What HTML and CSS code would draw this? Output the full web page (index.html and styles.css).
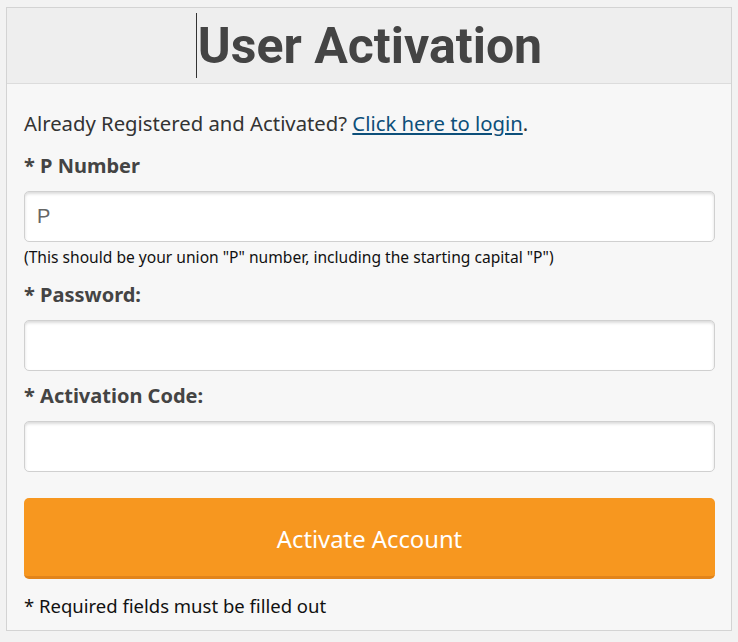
FILE: index.html
```html
<!DOCTYPE html>
<html lang="en">
<head>
  <meta charset="UTF-8">
  <title>User Activation</title>
  <link rel="stylesheet" href="styles.css">
</head>
<body>
  <div class="panel">
    <div class="panel-head">
      <h1><span class="caret"></span>User Activation</h1>
    </div>
    <form class="panel-body" onsubmit="return false">
      <p class="login-note">Already Registered and Activated? <a href="#">Click here to login</a>.</p>

      <label for="pnum">* P Number</label>
      <input type="text" id="pnum" class="with-hint" placeholder="P">
      <p class="hint">(This should be your union "P" number, including the starting capital "P")</p>

      <label for="pass">* Password:</label>
      <input type="password" id="pass">

      <label for="code">* Activation Code:</label>
      <input type="text" id="code">

      <button type="submit">Activate Account</button>

      <p class="required">* Required fields must be filled out</p>
    </form>
  </div>
</body>
</html>
```

FILE: styles.css
```css
body {
  margin: 0;
  padding: 7px 6px 0;
  background-color: #f2f2f2;
  font-family: 'Noto Sans', sans-serif;
  color: #333;
}
.panel {
  width: 724px;
  border: 1px solid #d3d3d3;
  background-color: #f7f7f7;
}
.panel-head {
  background-color: #eeeeee;
  border-bottom: 1px solid #dcdcdc;
  height: 75px;
  display: flex;
  justify-content: center;
  align-items: center;
}
h1 {
  margin: 0;
  font-family: 'Roboto', sans-serif;
  font-weight: bold;
  font-size: 50px;
  color: #444;
  display: flex;
  align-items: center;
}
.caret {
  display: inline-block;
  width: 1px;
  height: 65px;
  background-color: #333;
  margin-right: 1px;
}
.panel-body {
  display: flex;
  flex-direction: column;
  padding: 27px 16px 12px 17px;
}
.login-note {
  margin: 0 0 19px;
  font-size: 20.3px;
  line-height: 24px;
  color: #333;
}
.login-note a {
  color: #0d4f7a;
}
label {
  font-family: 'Noto Sans', sans-serif;
  font-weight: bold;
  font-size: 20px;
  line-height: 24px;
  color: #444;
  margin-bottom: 13px;
}
input {
  height: 51px;
  box-sizing: border-box;
  border: 1px solid #d0d0d0;
  border-radius: 5px;
  background-color: #fff;
  box-shadow: inset 0 2px 3px rgba(0,0,0,0.14);
  padding: 0 12px;
  font-family: 'Liberation Sans', sans-serif;
  font-size: 20px;
  color: #333;
  margin-bottom: 13px;
}
input.with-hint {
  margin-bottom: 6px;
}
input::placeholder {
  color: #666;
}
.hint {
  margin: 0 0 17px;
  font-size: 15.6px;
  line-height: 18px;
  color: #111;
}
button {
  margin-top: 13px;
  height: 81px;
  padding-top: 4px;
  border: none;
  border-bottom: 3px solid #e2841a;
  border-radius: 5px;
  background-color: #f7971f;
  color: #fff;
  font-family: 'Noto Sans', sans-serif;
  font-size: 23.8px;
  cursor: pointer;
}
.required {
  margin: 15px 0 0;
  font-family: 'Noto Sans', sans-serif;
  font-size: 18.5px;
  line-height: 24px;
  color: #111;
}
```
